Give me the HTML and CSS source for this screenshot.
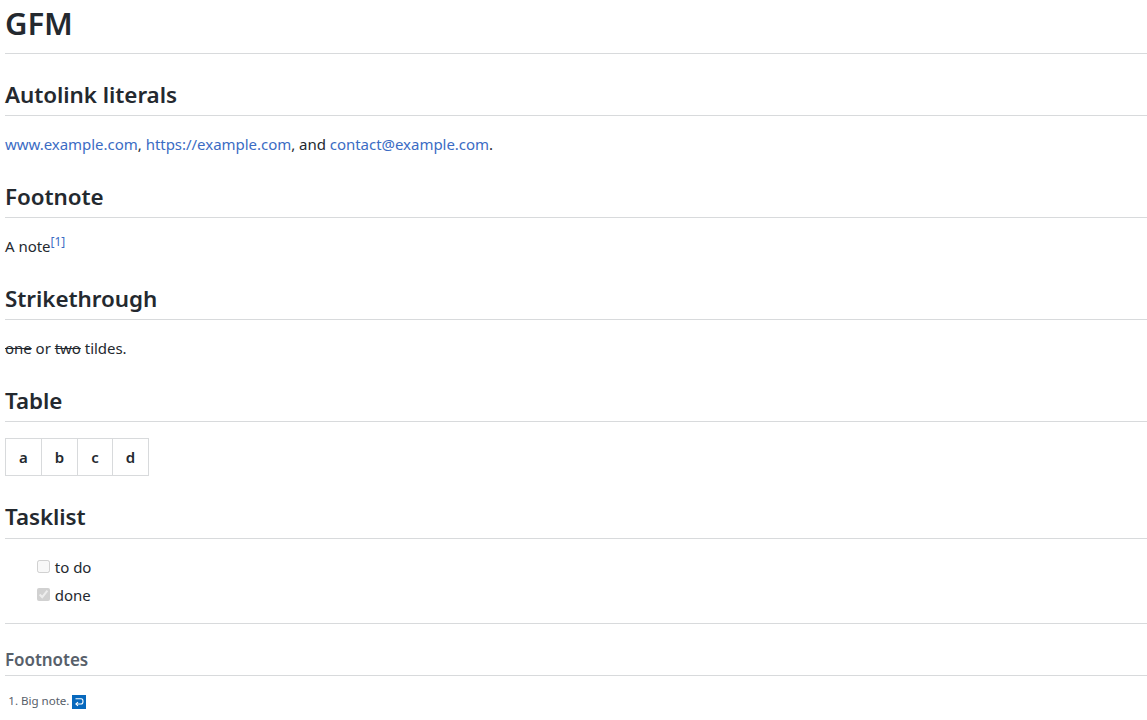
FILE: index.html
```html
<!DOCTYPE html>
<html lang="en">
<head>
<meta charset="utf-8">
<title>GFM</title>
<link rel="stylesheet" href="styles.css">
</head>
<body>
<main class="markdown-body">
<h1>GFM</h1>
<h2>Autolink literals</h2>
<p><a href="#">www.example.com</a>, <a href="#">https://example.com</a>, and <a href="#">contact@example.com</a>.</p>
<h2>Footnote</h2>
<p>A note<sup><a href="#">[1]</a></sup></p>
<h2>Strikethrough</h2>
<p><del>one</del> or <del>two</del> tildes.</p>
<h2>Table</h2>
<table>
<thead><tr><th>a</th><th>b</th><th>c</th><th>d</th></tr></thead>
</table>
<h2>Tasklist</h2>
<ul class="tasks">
<li><input type="checkbox" disabled> to do</li>
<li><input type="checkbox" checked disabled> done</li>
</ul>
<section class="footnotes">
<h2>Footnotes</h2>
<ol>
<li>Big note. <a href="#" class="backref" aria-label="Back to content"><svg width="14" height="14" viewBox="0 0 14 14" aria-hidden="true"><rect width="14" height="14" fill="#0668bd"/><path d="M3.5 3.8H9.2C10.6 3.8 11 4.8 11 6.2C11 8 10.4 9 9 9H4.5" fill="none" stroke="#fff" stroke-width="1.1"/><path d="M6 7.2L3.9 9L6 10.8" fill="none" stroke="#fff" stroke-width="1.1"/></svg></a></li>
</ol>
</section>
</main>
</body>
</html>
```
FILE: styles.css
```css
html, body {
  margin: 0;
  background: #fff;
}
.markdown-body {
  padding: 3px 0 0 5px;
  font-family: "Noto Sans", sans-serif;
  font-size: 15px;
  letter-spacing: -0.03px;
  line-height: 24px;
  color: #24292f;
}
h1, h2 {
  margin: 24px 0 16px;
  font-weight: 600;
  letter-spacing: -0.05px;
  border-bottom: 1px solid #d8dadc;
}
h1 {
  margin-top: 0;
  font-size: 31px;
  line-height: 40px;
  padding-bottom: 9.6px;
}
h2 {
  font-size: 22.4px;
  line-height: 30px;
  padding: 2px 0 5.2px;
}
p {
  margin: 0 0 16px;
}
a {
  color: #3b6cc4;
  text-decoration: none;
}
sup {
  font-size: 12px;
  line-height: 0;
  vertical-align: super;
}
table {
  border-collapse: collapse;
  margin: 0 0 16px;
}
th {
  border: 1px solid #d8dadc;
  padding: 6px 13px;
  font-weight: 600;
}
.tasks {
  list-style: none;
  margin: 0 0 16px;
  padding: 0 0 0 32px;
}
.tasks li + li {
  margin-top: 4px;
}
.tasks input {
  margin: 0 1px 0 0;
}
.footnotes {
  border-top: 1px solid #d8dadc;
  font-size: 11.6px;
  line-height: 18px;
  color: #57606a;
}
.footnotes h2 {
  font-size: 17px;
  line-height: 22.5px;
  padding: 1.5px 0 3.9px;
}
.footnotes ol {
  margin: 0;
  padding-left: 16px;
}
.backref svg {
  vertical-align: -4px;
}
```
